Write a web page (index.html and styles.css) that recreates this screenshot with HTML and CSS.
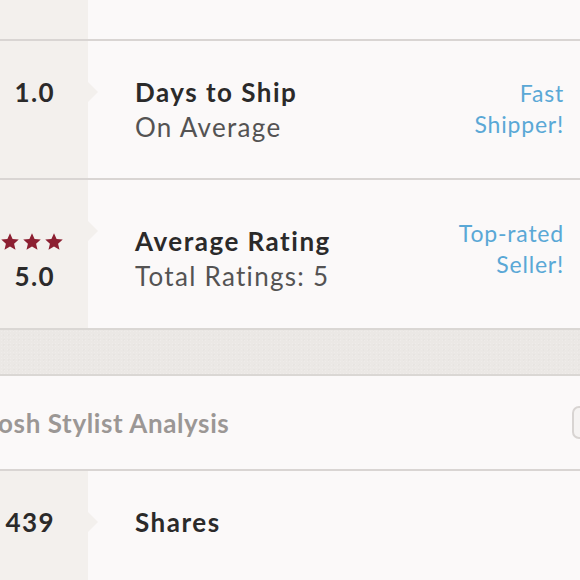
FILE: index.html
```html
<!DOCTYPE html>
<html>
<head>
<meta charset="utf-8">
<link rel="stylesheet" href="styles.css">
</head>
<body>
<div class="page">
  <div class="row row-top">
    <div class="left"></div>
    <div class="main"></div>
  </div>

  <div class="row stat">
    <div class="left">
      <div class="value">1.0</div>
      <span class="notch"></span>
    </div>
    <div class="main">
      <div class="text">
        <div class="title">Days to Ship</div>
        <div class="sub">On Average</div>
      </div>
      <div class="tag">Fast<br>Shipper!</div>
    </div>
  </div>

  <div class="row stat stat-rating">
    <div class="left">
      <div class="stars">
        <svg viewBox="0 0 24 24"><path d="M12 1.5l3.1 7 7.4.6-5.6 4.9 1.7 7.4L12 17.5l-6.6 3.9 1.7-7.4L1.5 9.1l7.4-.6z"/></svg>
        <svg viewBox="0 0 24 24"><path d="M12 1.5l3.1 7 7.4.6-5.6 4.9 1.7 7.4L12 17.5l-6.6 3.9 1.7-7.4L1.5 9.1l7.4-.6z"/></svg>
        <svg viewBox="0 0 24 24"><path d="M12 1.5l3.1 7 7.4.6-5.6 4.9 1.7 7.4L12 17.5l-6.6 3.9 1.7-7.4L1.5 9.1l7.4-.6z"/></svg>
      </div>
      <div class="value">5.0</div>
      <span class="notch"></span>
    </div>
    <div class="main">
      <div class="text">
        <div class="title">Average Rating</div>
        <div class="sub">Total Ratings: 5</div>
      </div>
      <div class="tag">Top-rated<br>Seller!</div>
    </div>
  </div>

  <div class="band"></div>

  <div class="section-head">
    <h2 class="section-title">Posh Stylist Analysis</h2>
    <span class="toggle"></span>
  </div>

  <div class="row stat stat-last">
    <div class="left">
      <div class="value">439</div>
      <span class="notch"></span>
    </div>
    <div class="main">
      <div class="text">
        <div class="title">Shares</div>
      </div>
    </div>
  </div>
</div>
</body>
</html>
```

FILE: styles.css
```css
* { box-sizing: border-box; }
html, body {
  margin: 0;
  padding: 0;
  background: #fbf9f9;
}
body {
  font-family: "Lato", "Open Sans", sans-serif;
  color: #2b2a2a;
}
.page {
  width: 580px;
  height: 580px;
  overflow: hidden;
  background: #fbf9f9;
}
.row {
  display: flex;
  border-bottom: 2px solid #d9d5d3;
}
.row-top { height: 41px; }
.left {
  position: relative;
  width: 88px;
  flex: none;
  background: #f3f0ed;
  text-align: right;
  padding-right: 33px;
}
.main {
  flex: 1;
  display: flex;
  justify-content: space-between;
  padding-left: 47px;
  padding-right: 16px;
}
.stat { height: 139px; }
.stat .left { padding-top: 34px; }
.stat .main { padding-top: 34px; }
.value {
  font-weight: 700;
  font-size: 26px;
  line-height: 35px;
  letter-spacing: 1.4px;
}
.notch {
  position: absolute;
  right: -10px;
  top: 41px;
  width: 0;
  height: 0;
  border-top: 10px solid transparent;
  border-bottom: 10px solid transparent;
  border-left: 10px solid #f3f0ed;
}
.title {
  font-weight: 700;
  font-size: 26px;
  line-height: 35px;
  letter-spacing: 1.5px;
}
.sub {
  font-size: 26px;
  line-height: 35px;
  letter-spacing: 1.3px;
  color: #545353;
}
.tag {
  text-align: right;
  font-size: 23px;
  line-height: 31px;
  letter-spacing: 0.8px;
  color: #5aa8d6;
  padding-top: 3px;
}
.stat-rating { height: 148px; border-bottom: none; }
.stat-rating .left,
.stat-rating .main { padding-top: 44px; }
.stat-rating .tag { padding-top: 0; margin-top: -6px; }
.stars {
  display: flex;
  justify-content: flex-end;
  gap: 2px;
  height: 35px;
  align-items: center;
  margin-right: -9px;
  margin-left: -60px;
}
.stars svg {
  width: 20px;
  height: 20px;
  fill: #8c1f31;
  flex: none;
}
.band {
  height: 48px;
  background-color: #ebe8e5;
  background-image:
    radial-gradient(rgba(255,255,255,0.18) 1px, transparent 1px),
    radial-gradient(rgba(0,0,0,0.015) 1px, transparent 1px);
  background-size: 3px 3px, 5px 5px;
  background-position: 0 0, 1px 2px;
  border-top: 2px solid #dad7d4;
  border-bottom: 2px solid #dad7d4;
}
.section-head {
  height: 95px;
  display: flex;
  align-items: center;
  justify-content: space-between;
  border-bottom: 2px solid #d9d5d3;
}
.section-title {
  margin: 0 0 0 -18px;
  font-size: 26px;
  font-weight: 700;
  letter-spacing: 0.6px;
  color: #9b9795;
}
.toggle {
  width: 30px;
  height: 33px;
  margin-right: -22px;
  border: 2px solid #d8d4d2;
  border-radius: 7px;
  background: #f5f3f2;
  flex: none;
}
.stat-last { border-bottom: none; height: 120px; }
```
